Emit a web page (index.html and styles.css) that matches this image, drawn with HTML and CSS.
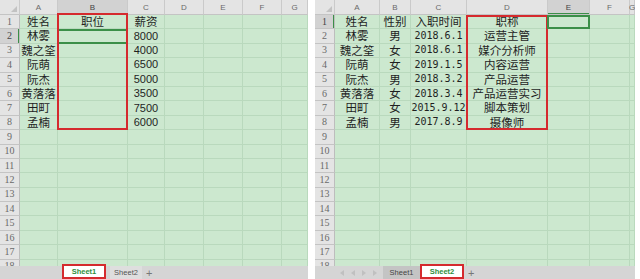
FILE: index.html
```html
<!DOCTYPE html>
<html lang="zh-CN">
<head>
    <meta charset="UTF-8">
    <meta name="viewport" content="width=device-width, initial-scale=1.0">
    <title>员工表</title>
    <link rel="stylesheet" href="styles.css">
</head>
<body>
    <div class="container">
        <div class="sheet sheet-left">
            <div class="grid" id="gridLeft"></div>
            <div class="tab-bar">
                <div class="tab-nav"></div>
                <div class="tab active">Sheet1</div>
                <div class="tab light">Sheet2</div>
                <div class="tab-add">+</div>
            </div>
        </div>
        <div class="sheet sheet-right">
            <div class="grid" id="gridRight"></div>
            <div class="tab-bar">
                <div class="tab-nav">
                    <span class="arrow arrow-first"></span>
                    <span class="arrow arrow-prev"></span>
                    <span class="arrow arrow-next"></span>
                    <span class="arrow arrow-last"></span>
                </div>
                <div class="tab dark">Sheet1</div>
                <div class="tab active">Sheet2</div>
                <div class="tab-add">+</div>
            </div>
        </div>
    </div>
    <script>
        // Sheet data: one array per row, first row is the title row
        var sheets = [
            {
                id: "gridLeft",
                cols: ["A", "B", "C", "D", "E", "F", "G"],
                rows: [
                    ["姓名", "职位", "薪资"],
                    ["林雾", "", "8000"],
                    ["魏之筌", "", "4000"],
                    ["阮萌", "", "6500"],
                    ["阮杰", "", "5000"],
                    ["黄落落", "", "3500"],
                    ["田町", "", "7500"],
                    ["孟楠", "", "6000"]
                ],
                numCols: [2],
                box: { col: 1, from: 0, to: 7 },
                selected: { col: 1, row: 1 }
            },
            {
                id: "gridRight",
                cols: ["A", "B", "C", "D", "E", "F", "G"],
                rows: [
                    ["姓名", "性别", "入职时间", "职称"],
                    ["林雾", "男", "2018.6.1", "运营主管"],
                    ["魏之筌", "女", "2018.6.1", "媒介分析师"],
                    ["阮萌", "女", "2019.1.5", "内容运营"],
                    ["阮杰", "男", "2018.3.2", "产品运营"],
                    ["黄落落", "女", "2018.3.4", "产品运营实习"],
                    ["田町", "女", "2015.9.12", "脚本策划"],
                    ["孟楠", "男", "2017.8.9", "摄像师"]
                ],
                numCols: [2],
                box: { col: 3, from: 0, to: 7 },
                selected: { col: 4, row: 0 }
            }
        ];

        var ROW_COUNT = 18;

        function makeDiv(className, text) {
            var div = document.createElement("div");
            div.className = className;
            if (text) {
                div.textContent = text;
            }
            return div;
        }

        sheets.forEach(function (sheet) {
            var grid = document.getElementById(sheet.id);

            // Column headers
            grid.appendChild(makeDiv("corner"));
            sheet.cols.forEach(function (name, c) {
                var cls = "col-head";
                if (c === sheet.selected.col) cls += " active";
                grid.appendChild(makeDiv(cls, name));
            });

            // Rows
            for (var r = 0; r < ROW_COUNT; r++) {
                var rowCls = "row-head";
                if (r === sheet.selected.row) rowCls += " active";
                grid.appendChild(makeDiv(rowCls, String(r + 1)));

                for (var c = 0; c < sheet.cols.length; c++) {
                    var text = (sheet.rows[r] && sheet.rows[r][c]) || "";
                    var cls = "cell";
                    if (r > 0 && sheet.numCols.indexOf(c) !== -1) cls += " num";
                    if (c === sheet.box.col && r >= sheet.box.from && r <= sheet.box.to) {
                        cls += " box";
                        if (r === sheet.box.from) cls += " box-top";
                        if (r === sheet.box.to) cls += " box-bottom";
                    }
                    if (c === sheet.selected.col && r === sheet.selected.row) cls += " sel";
                    grid.appendChild(makeDiv(cls, text));
                }
            }
        });
    </script>
</body>
</html>
```

FILE: styles.css
```css
body {
    margin: 0;
    padding: 0;
    background-color: #fff;
    font-family: "Noto Sans CJK SC", sans-serif;
    color: #1f1f1f;
}
.container {
    display: flex;
    gap: 7px;
}
.sheet {
    display: flex;
    flex-direction: column;
    height: 279px;
    overflow: hidden;
}
.sheet-left {
    width: 308px;
}
.sheet-right {
    width: 320px;
}
.grid {
    flex: none;
    display: grid;
    grid-template-rows: 15px;
    grid-auto-rows: 14.4px;
    height: 266px;
    overflow: hidden;
    background-color: #cce8cf;
}
.sheet-left .grid {
    grid-template-columns: 20px 38px 70px 37px 39px 39px 39px 26px;
}
.sheet-right .grid {
    grid-template-columns: 20px 45px 31px 56px 81px 42px 40px 5px;
}

/* headers */
.corner,
.col-head,
.row-head {
    display: flex;
    align-items: center;
    justify-content: center;
    box-sizing: border-box;
    background-color: #e4e4e4;
    color: #6a6a6a;
    border-right: 1px solid #cacaca;
    border-bottom: 1px solid #c4c4c4;
}
.corner {
    position: relative;
}
.corner::after {
    content: "";
    position: absolute;
    right: 2px;
    bottom: 2px;
    border-left: 6px solid transparent;
    border-bottom: 6px solid #c2c2c2;
}
.col-head {
    font-family: "Liberation Sans", sans-serif;
    font-size: 8px;
}
.row-head {
    font-family: "Liberation Serif", serif;
    font-size: 10px;
    line-height: 1;
    border-right-color: #bdbdbd;
}
.col-head.active,
.row-head.active {
    background-color: #d2d2d2;
    color: #444;
}
.col-head.active {
    box-shadow: inset 0 -1px #3b8f48;
}
.row-head.active {
    box-shadow: inset -1px 0 #3b8f48;
}

/* cells */
.cell {
    position: relative;
    display: flex;
    align-items: center;
    justify-content: center;
    box-sizing: border-box;
    border-right: 1px solid #b9d9bd;
    border-bottom: 1px solid #b9d9bd;
    font-size: 11.5px;
    line-height: 1;
    white-space: nowrap;
}
.cell.num {
    font-family: "DejaVu Sans Mono", monospace;
    font-size: 10px;
}
.sheet-left .cell.num {
    font-family: "Liberation Sans", sans-serif;
    font-size: 11px;
}
.box::after {
    content: "";
    position: absolute;
    top: 0;
    bottom: -1px;
    left: -1px;
    right: -1px;
    border-left: 2px solid #d52a2e;
    border-right: 2px solid #d52a2e;
    pointer-events: none;
}
.box-top::after {
    border-top: 2px solid #d52a2e;
}
.sheet-left .box-top::after {
    top: -2px;
}
.box-bottom::after {
    border-bottom: 2px solid #d52a2e;
}
.sel::before {
    content: "";
    position: absolute;
    top: 0;
    bottom: -1px;
    left: -1px;
    right: -1px;
    border: 2px solid #3b8f48;
}

/* sheet tabs */
.tab-bar {
    flex: none;
    display: flex;
    height: 13px;
    background-color: #d5d5d5;
    font-family: "Liberation Sans", sans-serif;
    font-size: 7.5px;
}
.sheet-left .tab-nav {
    width: 62px;
}
.sheet-right .tab-nav {
    width: 68px;
    display: flex;
    align-items: center;
    justify-content: flex-end;
    gap: 7px;
    padding-right: 6px;
    box-sizing: border-box;
}
.arrow {
    width: 0;
    height: 0;
    border-top: 3px solid transparent;
    border-bottom: 3px solid transparent;
}
.arrow-first,
.arrow-prev {
    border-right: 4px solid #c0c0c0;
}
.arrow-next,
.arrow-last {
    border-left: 4px solid #c0c0c0;
}
.tab {
    display: flex;
    align-items: center;
    justify-content: center;
    box-sizing: border-box;
    color: #555;
}
.sheet-left .tab {
    width: 44px;
}
.sheet-left .tab.light {
    width: 32px;
    margin-left: 4px;
    background-color: #dedede;
}
.tab.dark {
    width: 37px;
    background-color: #c4c4c4;
    color: #444;
}
.sheet-right .tab.active {
    width: 44px;
}
.tab.active {
    height: 15px;
    margin-top: -2px;
    background-color: #fff;
    border: 2px solid #d52a2e;
    color: #2f8f3c;
    font-weight: bold;
}
.tab-add {
    display: flex;
    align-items: center;
    padding-left: 4px;
    font-size: 11px;
    color: #777;
}
```
